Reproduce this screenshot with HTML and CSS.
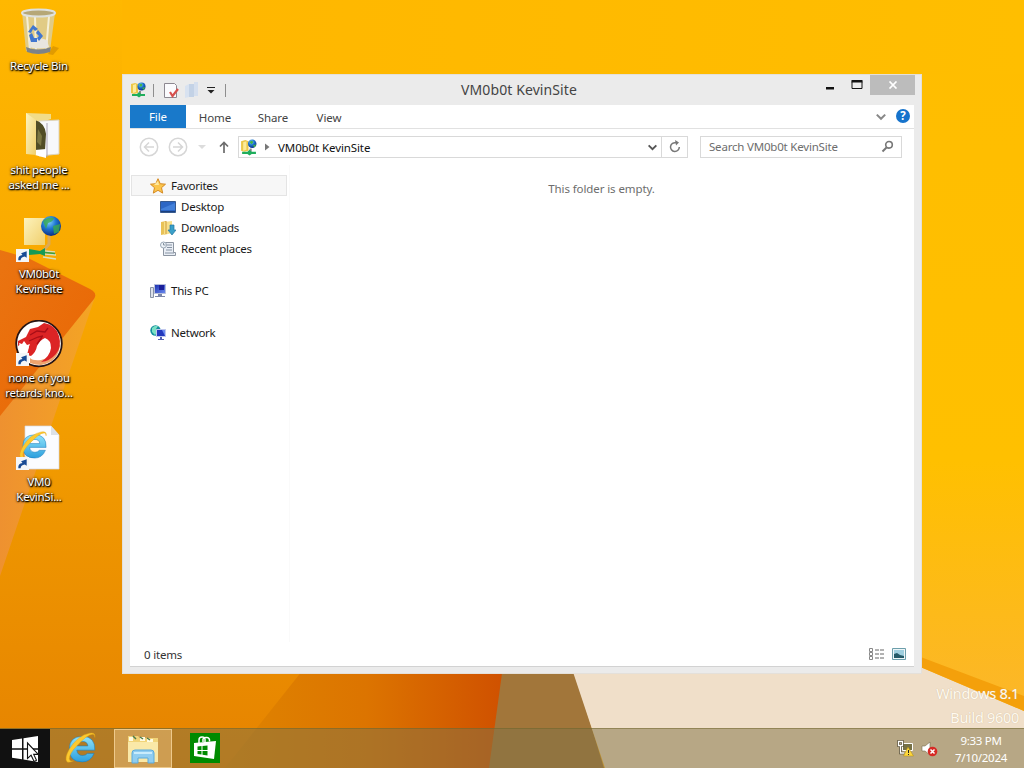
FILE: index.html
```
<!DOCTYPE html>
<html lang="en">
<head>
    <meta charset="UTF-8">
    <meta name="viewport" content="width=device-width, initial-scale=1.0">
    <title>VM0b0t KevinSite</title>
    <link rel="stylesheet" href="styles.css">
</head>
<body>
<!-- shared icons -->
<svg class="defs" width="0" height="0">
    <defs>
        <linearGradient id="ie-blue" x1="0" y1="0" x2="0" y2="1">
            <stop offset="0" stop-color="#8fe3fb"/><stop offset="1" stop-color="#2c9fdd"/>
        </linearGradient>
        <radialGradient id="globe" cx=".4" cy=".3" r=".7">
            <stop offset="0" stop-color="#7fd0ff"/><stop offset=".5" stop-color="#1c74cf"/><stop offset="1" stop-color="#0b2f86"/>
        </radialGradient>
        <linearGradient id="folder" x1="0" y1="0" x2="1" y2="1">
            <stop offset="0" stop-color="#fdf3bd"/><stop offset="1" stop-color="#f0cf6c"/>
        </linearGradient>
        <linearGradient id="screen" x1="0" y1="0" x2="1" y2="1">
            <stop offset="0" stop-color="#1b2fae"/><stop offset="1" stop-color="#6c8cf0"/>
        </linearGradient>
    </defs>
    <symbol id="site" viewBox="0 0 16 16">
        <path d="M1 2l4-1 3 1v9l-4 1-3-1z" fill="#ecc84a"/>
        <path d="M3 3l3-1v8l-3 1z" fill="#fbeb9b"/>
        <circle cx="11.500" cy="4.500" r="4" fill="url(#globe)"/>
        <path d="M9 3q2-2 3-1t-1 3zM12 6l3-1-1 3z" fill="#43b649"/>
        <path d="M9 9h2v3H9z" fill="#888"/>
        <path d="M2 12h5l2-2 2 2h4v2h-4l-2 1.500L7 14H2z" fill="#1fae5c"/>
    </symbol>
    <symbol id="ie" viewBox="0 0 32 32">
        <path d="M29 19H12q.8 5 5.500 5 3 0 4.500-2h6.300Q25 30 17.300 30 5 30 5 18T17.300 6Q29.500 6 29 19zM12 15h10.500q-.6-4.200-5-4.200T12 15z" fill="url(#ie-blue)" stroke="#1878b8" stroke-width=".5" fill-rule="evenodd"/>
        <path d="M29 7q1-5-5-4Q13 5 5 18 0 27 3 30q2 1 6-1-4 1-4-2 0-5 7-12Q22 4 27 4q2 0 2 3z" fill="#fcc92f" stroke="#e5a411" stroke-width=".4"/>
    </symbol>
    <symbol id="shortcut" viewBox="0 0 14 14">
        <path d="M0 0h14v14H0z" fill="#f4f6f8"/>
        <path d="M2.500 12Q2 7 7 6.500L5.500 4.500 11.500 2.500v7L9.500 8Q5 8.500 5 12z" fill="#174a94"/>
    </symbol>
    <symbol id="chevron" viewBox="0 0 10 10">
        <path d="M1.500 3L5 6.500 8.500 3" fill="none" stroke="currentColor" stroke-width="1.700"/>
    </symbol>
</svg>

<div class="desktop">
    <!-- wallpaper -->
    <svg class="wallpaper" viewBox="0 0 1024 768" preserveAspectRatio="none">
        <defs>
            <linearGradient id="bg" x1="0" y1="0" x2="0" y2="1">
                <stop offset="0" stop-color="#ffb800"/><stop offset=".35" stop-color="#f9a900"/>
                <stop offset=".65" stop-color="#ef9700"/><stop offset="1" stop-color="#e68300"/>
            </linearGradient>
            <linearGradient id="bg-right" x1="0" y1="0" x2="0" y2="1">
                <stop offset="0" stop-color="#ffbd00"/><stop offset=".6" stop-color="#ffc000"/><stop offset=".9" stop-color="#fcb727"/>
            </linearGradient>
            <linearGradient id="top" x1="0" y1="0" x2="1" y2="0">
                <stop offset="0" stop-color="#ffb600"/><stop offset="1" stop-color="#ffbe00"/>
            </linearGradient>
            <linearGradient id="fold" x1="0" y1="0" x2="1" y2="1">
                <stop offset="0" stop-color="#ea7411"/><stop offset="1" stop-color="#e96603"/>
            </linearGradient>
            <linearGradient id="ray" x1="0" y1="0" x2="1" y2="0">
                <stop offset="0" stop-color="#ee9130"/><stop offset="1" stop-color="#f4a524"/>
            </linearGradient>
            <linearGradient id="low" x1="0" y1="0" x2="1" y2="0">
                <stop offset="0" stop-color="#df8400"/><stop offset=".5" stop-color="#dc7400"/><stop offset="1" stop-color="#cf4f00"/>
            </linearGradient>
        </defs>
        <path d="M0 0h1024v768H0z" fill="url(#bg)"/>
        <path d="M400 0h624v768H400z" fill="url(#bg-right)"/>
        <path d="M122 0h902v74H122z" fill="url(#top)"/>
        <path d="M96 294L0 576V390z" fill="url(#ray)"/>
        <path d="M0 250l28 8 62 31q8 4 4 10L0 416z" fill="url(#fold)"/>
        <path d="M306 666L225 768h285V666z" fill="url(#low)"/>
        <path d="M503 666l-14 102h115l-31-102z" fill="#a2763a"/>
        <path d="M571 666h347l106 45v57H605z" fill="#f0dfc9"/>
        <path d="M918 656l106 40v15l-106-45z" fill="#f4a00b"/>
    </svg>

    <div class="icons">
        <div class="shortcut">
            <svg width="48" height="48" viewBox="0 0 48 48">
                <path d="M38 38l6 2-6 7-5-1z" fill="#a06000" opacity=".3"/>
                <path d="M7 4l4 39q12 5 24 0l5-38z" fill="#dccf9c" opacity=".85"/>
                <path d="M12 8l3 34M20 9l1 35M34 8l-3 35" stroke="#f5efd5" stroke-width="2"/>
                <path d="M11 39q12 5 25 0l-1 5q-12 4-23 0z" fill="#7d8387"/>
                <path d="M14 33l8-4 10 3 2 7q-10 3-20 0z" fill="#e8e6df"/>
                <ellipse cx="23.500" cy="5" rx="16.500" ry="3.500" fill="#b6a777" stroke="#dfe1de" stroke-width="2"/>
                <path d="M13 24l5-7 5 4-3 2-2-2-2 4zM23 22l5 6-4 5-2-3 2-2-3-3zM14 27l3-2 2 5h3v4h-6z" fill="#4177cf"/>
            </svg>
            <span>Recycle Bin</span>
        </div>
        <div class="shortcut">
            <svg width="48" height="48" viewBox="0 0 48 48">
                <path d="M11 1l25 1v5L21 12 11 6z" fill="#f1dc88"/>
                <path d="M24 9l20-1v34l-20 2z" fill="#f7f8fb" stroke="#dcd4bd"/>
                <path d="M20 8q10 3 11 14l-1 16-10 4z" fill="#514d26"/>
                <path d="M23 17l4 7-1 10-4-4z" fill="#7b7642"/>
                <path d="M32 11v34" stroke="#aaa3b4"/>
                <path d="M20 38l11-1v9l-11-3z" fill="#fff"/>
                <path d="M11 1l10 7v35l-10-1z" fill="url(#folder)"/>
            </svg>
            <span>shit people<br>asked me ...</span>
        </div>
        <div class="shortcut">
            <svg width="48" height="48" viewBox="0 0 48 48">
                <path d="M9 2h21v27H9z" fill="url(#folder)"/>
                <path d="M34 18v10l-5 6" stroke="#dcaa55" stroke-width="3" fill="none"/>
                <circle cx="36" cy="10" r="10" fill="url(#globe)"/>
                <path d="M28 5q5-5 11-3-1 4-6 5l-2 6zM38 10l7-2-1 8-5 2z" fill="#3bab4c" opacity=".8"/>
                <path d="M14 33l11 2 5-3v8l-5-2-11 1z" fill="#159a55"/>
                <path d="M30 35l10 1M30 38l11 1M28 41l13 2" stroke="#d9dfba" stroke-width="1.500"/>
                <path d="M30 36.500l10 1" stroke="#34a047" stroke-width="1.500"/>
                <use href="#shortcut" x="1" y="33" width="13" height="13"/>
            </svg>
            <span>VM0b0t<br>KevinSite</span>
        </div>
        <div class="shortcut">
            <svg width="48" height="48" viewBox="0 0 48 48">
                <circle cx="24" cy="23.500" r="22.800" fill="#fff" stroke="#271413" stroke-width="1.800"/>
                <path d="M26 45q18-3 19-21-5 13-19 16-8 1-11-2v5q5 2 11 2z" fill="#efa36c"/>
                <path d="M3 21l8-4 4-8 8-2 6-4q12 2 15 13 3 11-3 18-6 7-15 8 9-6 10-14 0-8-6-10-5 2-8 8-1 6-6 10l-4-1 2-8-5 1-3-4-3 2z" fill="#dc2425"/>
                <path d="M15 15l7-4 8 1 3-4M14 21l9-4 5-1M22 24l5-7" fill="none" stroke="#a80e17" stroke-width="1.300"/>
                <path d="M4 23l3 1 2-3 3 4 3-1-2 5-7 2z" fill="#fff"/>
                <use href="#shortcut" x="1" y="33" width="13" height="13"/>
            </svg>
            <span>none of you<br>retards kno...</span>
        </div>
        <div class="shortcut">
            <svg width="48" height="48" viewBox="0 0 48 48">
                <path d="M10 2h26l8 9v34H10z" fill="#fbfcff" stroke="#d7d9dd" stroke-width=".7"/>
                <path d="M36 2v9h8z" fill="#dce1e7"/>
                <use href="#ie" x="3" y="5" width="31" height="31"/>
                <use href="#shortcut" x="1" y="33" width="13" height="13"/>
            </svg>
            <span>VM0<br>KevinSi...</span>
        </div>
    </div>

    <div class="window">
        <div class="titlebar">
            <div class="quick">
                <svg width="16" height="16"><use href="#site"/></svg>
                <i class="sep"></i>
                <svg class="props" width="16" height="16" viewBox="0 0 16 16">
                    <path d="M1.500 1.500h10l2 2v12h-12z" fill="#fbfbfd" stroke="#8d8890"/>
                    <path d="M7 10l2.500 4L15 7" fill="none" stroke="#d6504d" stroke-width="2.200"/>
                </svg>
                <svg class="newfolder" width="14" height="16" viewBox="0 0 14 16">
                    <path d="M0 4l4-2v13l-4 1z" fill="#d8e2f0"/><path d="M4 2h5v13H4z" fill="#c3d2e6"/><path d="M9 0h4v14H9z" fill="#d5dfee"/>
                </svg>
                <svg class="menu" width="8" height="8" viewBox="0 0 8 8"><path d="M0 1.500h8" stroke="#222"/><path d="M.5 4h7L4 7.500z" fill="#222"/></svg>
                <i class="sep"></i>
            </div>
            <div class="title">VM0b0t KevinSite</div>
            <div class="controls">
                <svg width="10" height="12" viewBox="0 0 10 12"><path d="M1 9h8v2.500H1z" fill="#111"/></svg>
                <svg class="max" width="12" height="10" viewBox="0 0 12 10"><path d="M1 1.500h10v7H1z" fill="none" stroke="#111"/><path d="M.5 0h11v2.500H.5z" fill="#111"/></svg>
                <div class="close"><svg width="10" height="8" viewBox="0 0 10 8"><path d="M1.500 .5l7 7M8.500 .5l-7 7" stroke="#fff" stroke-width="1.700"/></svg></div>
            </div>
        </div>

        <div class="client">
            <div class="tabs">
                <div class="tab file">File</div>
                <div class="tab">Home</div>
                <div class="tab">Share</div>
                <div class="tab view">View</div>
                <svg class="expand" width="12" height="12"><use href="#chevron"/></svg>
                <div class="help">?</div>
            </div>

            <div class="navbar">
                <svg width="20" height="20" viewBox="0 0 20 20" class="nav"><circle cx="10" cy="10" r="8.700"/><path d="M15 10H6M10 5.500L5.500 10l4.500 4.500"/></svg>
                <svg width="20" height="20" viewBox="0 0 20 20" class="nav"><circle cx="10" cy="10" r="8.700"/><path d="M5 10h9M10 5.500l4.500 4.500-4.500 4.500"/></svg>
                <svg class="recent" width="8" height="4" viewBox="0 0 8 4"><path d="M0 0h8L4 4z" fill="#dcdcdc"/></svg>
                <svg class="up" width="12" height="14" viewBox="0 0 12 14"><path d="M6 13V2.500M2 6.500l4-4 4 4" fill="none" stroke="#6c6c6c" stroke-width="1.700"/></svg>
                <div class="address">
                    <svg width="17" height="17"><use href="#site"/></svg>
                    <svg class="arrow" width="5" height="8" viewBox="0 0 5 8"><path d="M0 .5L4.500 4 0 7.500z" fill="#777"/></svg>
                    <span>VM0b0t KevinSite</span>
                    <svg class="drop" width="11" height="11"><use href="#chevron"/></svg>
                    <div class="refresh">
                        <svg width="14" height="14" viewBox="0 0 14 14"><path d="M8 2.800A4.400 4.400 0 1 0 11.300 7" fill="none" stroke="#777" stroke-width="1.500"/><path d="M7 0l4 2.500L8 5.500z" fill="#777"/></svg>
                    </div>
                </div>
                <div class="search">
                    <span>Search VM0b0t KevinSite</span>
                    <svg width="13" height="13" viewBox="0 0 13 13"><circle cx="8" cy="4.800" r="3.300" fill="none" stroke="#777" stroke-width="1.600"/><path d="M5.500 7.500L1.500 11.500" stroke="#777" stroke-width="2"/></svg>
                </div>
            </div>

            <div class="content">
                <div class="sidebar">
                    <div class="row selected">
                        <svg width="16" height="16" viewBox="0 0 16 16"><path d="M8 .7l2.200 5 5.300.5-4 3.500 1.200 5.400L8 12.300l-4.700 2.800 1.200-5.400-4-3.500 5.300-.5z" fill="#fbc54c" stroke="#d58a22"/><path d="M8 3l1 4-5 0z" fill="#ffe9a0"/></svg>
                        Favorites
                    </div>
                    <div class="row sub">
                        <svg width="16" height="16" viewBox="0 0 16 16"><path d="M.5 2.500h15v11H.500z" fill="#2c66c5" stroke="#36598f"/><path d="M1 10l14-6v7H1z" fill="#4380da"/><path d="M1 12h14v1H1z" fill="#1b3f7d"/></svg>
                        Desktop
                    </div>
                    <div class="row sub">
                        <svg width="16" height="16" viewBox="0 0 16 16"><path d="M1 2l5-1v13l-5 1z" fill="#e9c257"/><path d="M4 2l8-1v12l-8 2z" fill="#f7df8a"/><path d="M6 1v13" stroke="#cf9c3c"/><path d="M10 5h4v5h2l-4 5-4-5h2z" fill="#3aa0c9" stroke="#2277a1" stroke-width=".7"/></svg>
                        Downloads
                    </div>
                    <div class="row sub">
                        <svg width="16" height="16" viewBox="0 0 16 16"><path d="M3.500 1.500h10v10h2v3h-12z" fill="#e9eef5" stroke="#8c95a1"/><path d="M7 4h5M7 6.500h5M6 9h6M5 12h9" stroke="#8894a4"/><circle cx="3.500" cy="4" r="3" fill="#eef3f8" stroke="#9ba8b6"/><path d="M3.500 2v2h2" stroke="#607080" fill="none" stroke-width=".7"/></svg>
                        Recent places
                    </div>
                    <div class="row gap">
                        <svg width="16" height="16" viewBox="0 0 16 16"><path d="M.5 4.500h3v10h-3z" fill="#dce1ea" stroke="#8993a5"/><path d="M4.500 1.500h11v9h-11z" fill="url(#screen)" stroke="#b7bfdb"/><path d="M9 2h5v5H9z" fill="#1a1f9a"/><path d="M8 11h4v2h3v1H5v-1h3z" fill="#7b86a8"/></svg>
                        This PC
                    </div>
                    <div class="row gap">
                        <svg width="16" height="16" viewBox="0 0 16 16"><circle cx="5.500" cy="5.500" r="5.200" fill="#128f9d"/><path d="M2 3q3-3 6-2L6 4l3 2-4 4-3-3z" fill="#7be0c4"/><path d="M6.500 4.500h9v7h-9z" fill="#2238bd" stroke="#c0c8ee"/><path d="M12 5h3v6z" fill="#6c8cf0"/><path d="M10 12h2v2h2v1H8v-1h2z" fill="#5361b4"/></svg>
                        Network
                    </div>
                </div>
                <div class="files">This folder is empty.</div>
            </div>

            <div class="status">
                <span>0 items</span>
                <svg class="details" width="15" height="12" viewBox="0 0 15 12"><path d="M.5 .5h3v3h-3zM.5 4.500h3v3h-3zM.5 8.500h3v3h-3z" fill="#fff" stroke="#888"/><path d="M6 2h9M6 6h9M6 10h9" stroke="#666" stroke-dasharray="4 1"/></svg>
                <svg width="14" height="12" viewBox="0 0 14 12"><path d="M.5 .5h13v11H.5z" fill="#eef6f8" stroke="#6c9eab"/><path d="M2 2h10v8H2z" fill="#9fcfdf"/><path d="M2 10V6l3-1 3 2 4 1v2z" fill="#245a68"/></svg>
            </div>
        </div>
    </div>

    <div class="watermark">Windows 8.1<br>Build 9600</div>

    <div class="taskbar">
        <div class="start">
            <svg width="30" height="28" viewBox="0 0 30 28">
                <path d="M2 5l10-1.500v9.700H2zM13.500 3.300L28 1v12.200H13.500zM2 14.700h10v9.500L2 22.700zM13.500 14.700H28V27l-14.500-2.500z" fill="#fff"/>
                <path d="M17.500 8v15.500l3.600-3.300 3 6.300 2.400-1.200-2.800-5.900h4.600z" fill="#fff" stroke="#111" stroke-width="1.100"/>
            </svg>
        </div>
        <div class="app"><svg width="34" height="34"><use href="#ie"/></svg></div>
        <div class="app active">
            <svg width="32" height="30" viewBox="0 0 32 30">
                <path d="M1 2h10l2 2h18v24H1z" fill="#f1d479"/>
                <path d="M2 3h4v4H2zM13 3h5v4h-5zM20 5h6v3h-6z" fill="#fffbe0"/>
                <path d="M6 2l3 3M13 3l3 2M20 4l3 2" stroke="#4e7c4c" stroke-width="1.500"/>
                <path d="M1 8h30v20H1z" fill="#fae9a8"/>
                <path d="M5 29V19q0-3 3-3h16q3 0 3 3v10h-6v-5H11v5z" fill="#90cdf0" stroke="#5baadb"/>
                <path d="M7 19h18" stroke="#c9ecfc" stroke-width="2"/>
            </svg>
        </div>
        <div class="app store">
            <svg width="30" height="30" viewBox="0 0 30 30">
                <path d="M0 0h30v30H0z" fill="#008a00"/>
                <path d="M4 10l22-2-2 18-20-3z" fill="#fff"/>
                <path d="M9 11V7q0-3 3-3t3 2v4M13 9V6q1-2 4-1.500t2.500 4" fill="none" stroke="#fff" stroke-width="1.500"/>
                <path d="M7.500 13.500l4-.5v4h-4zM12.500 12.900l5-.5V17h-5zM7.500 18h4v3.500l-4-.5zM12.500 18h5v4.500l-5-.8z" fill="#008a00"/>
            </svg>
        </div>
        <div class="tray">
            <svg width="17" height="17" viewBox="0 0 17 17">
                <path d="M5.500 3.500h10v7h-10z" fill="#777146" stroke="#fff"/>
                <path d="M1.500 1.500h4v4h-4zM3.500 6v7h4" fill="none" stroke="#443d24" stroke-width="2.500"/>
                <path d="M1.500 1.500h4v4h-4zM3.500 6v7h4" fill="none" stroke="#fff" stroke-width="1.300"/>
                <path d="M11 7l5.500 9h-10z" fill="#ffd83c" stroke="#ae8a10" stroke-width=".5"/><path d="M11.500 10v3M11.500 14v1" stroke="#222"/>
            </svg>
            <svg width="17" height="17" viewBox="0 0 17 17">
                <path d="M1 6h3l5-4v13l-5-4H1z" fill="#fff" stroke="#776c4e" stroke-width=".6"/>
                <circle cx="11.500" cy="11.500" r="4.800" fill="#d62a25"/><path d="M9.500 9.500l4 4M13.500 9.500l-4 4" stroke="#fff" stroke-width="1.500"/>
            </svg>
            <div class="clock">9:33 PM<br>7/10/2024</div>
        </div>
    </div>
</div>
</body>
</html>
```
FILE: styles.css
```
*{
    box-sizing: border-box;
}

body{
    margin:0;
    font-family: "Noto Sans", "Open Sans", sans-serif;
    font-size: 11.5px;
    letter-spacing:-0.1px;
    color:#1a1a1a;
    overflow:hidden;
}

svg{
    display:block;
    flex:none;
}

.defs{
    position:absolute;
}

.desktop{
    position:relative;
    width:1024px;
    height:768px;
    display:flex;
    flex-direction: column;
    justify-content: space-between;
}

.wallpaper{
    position:absolute;
    inset:0;
    width:100%;
    height:100%;
}

/* desktop icons */
.icons{
    position:relative;
    width:78px;
    padding-top:8px;
}

.shortcut{
    height:104px;
    display:flex;
    flex-direction: column;
    align-items:center;
    text-align:center;
    line-height:15px;
    color:#fff;
    white-space:nowrap;
    text-shadow:1px 1px 1px #000, 0 1px 2px #000, 0 0 3px rgba(0, 0, 0, 0.7);
}

.shortcut span{
    margin-top:2px;
    letter-spacing:-0.25px;
}

/* explorer window */
.window{
    position:absolute;
    left:122px;
    top:74px;
    width:800px;
    height:600px;
    padding:0 7px 6px;
    background-color:#ebebeb;
    border:1px solid #e4e0da;
    display:flex;
    flex-direction: column;
}

.titlebar{
    height:30px;
    flex:none;
    display:grid;
    grid-template-columns: 1fr auto 1fr;
}

.quick{
    display:flex;
    align-items:center;
}

.quick .sep{
    width:1px;
    height:13px;
    background-color:#8e8e8e;
    margin:0 9px 0 7px;
}

.newfolder{
    margin:0 8px 0 6px;
}

.quick .menu + .sep{
    margin-left:10px;
}

.title{
    font-size:14px;
    line-height:29px;
    letter-spacing:0.1px;
    color:#444;
    padding-right:6px;
}

.controls{
    display:flex;
    justify-content: flex-end;
    align-items:flex-start;
    margin-right:-1px;
}

.controls > svg{
    margin-top:3px;
}

.controls .max{
    margin:5px 7px 0 16px;
}

.close{
    width:45px;
    height:20px;
    background-color:#bcbcbc;
    display:flex;
    align-items:center;
    justify-content: center;
}

.client{
    flex:1;
    background-color:#fff;
    border-bottom:1px solid #d2d2d2;
    display:flex;
    flex-direction: column;
}

.tabs{
    height:24px;
    flex:none;
    display:flex;
    align-items:center;
    border-bottom:1px solid #e1e1e1;
}

.tab{
    width:58px;
    text-align:center;
    line-height:23px;
    padding-top:2px;
    color:#444;
}

.tab.file{
    width:56px;
    height:23px;
    padding-top:0;
    background-color:#1979ca;
    color:#fff;
}

.tab.view{
    width:54px;
}

.expand{
    margin-left:auto;
    color:#888;
}

.help{
    width:14px;
    height:14px;
    margin:0 4px 1px 9px;
    border-radius:50%;
    background-color:#1673cc;
    color:#fff;
    font-weight:bold;
    line-height:14px;
    text-align:center;
}

.navbar{
    height:36px;
    flex:none;
    display:flex;
    align-items:center;
    padding:0 12px 0 9px;
}

.nav{
    fill:none;
    stroke:#d6d6d6;
    stroke-width:1.5;
    margin-right:9px;
}

.recent{
    margin-left:1px;
}

.up{
    margin:0 8px 0 12px;
}

.address{
    width:450px;
    height:22px;
    border:1px solid #d9d9d9;
    display:flex;
    align-items:center;
    padding-left:1px;
}

.arrow{
    margin:0 8px 0 8px;
}

.address span{
    color:#111;
}

.drop{
    margin-left:auto;
    margin-right:3px;
    color:#555;
}

.refresh{
    width:26px;
    height:20px;
    border-left:1px solid #d9d9d9;
    display:flex;
    align-items:center;
    justify-content: center;
}

.search{
    width:202px;
    height:22px;
    margin-left:auto;
    border:1px solid #d9d9d9;
    display:flex;
    align-items:center;
    justify-content: space-between;
    padding:0 7px 1px 8px;
    color:#6d6d6d;
    letter-spacing:-0.2px;
}

.content{
    flex:1;
    display:flex;
}

.sidebar{
    width:160px;
    padding:10px 2px 0 1px;
    border-right:1px solid #fafafa;
}

.row{
    width:156px;
    height:21px;
    display:flex;
    align-items:center;
    gap:5px;
    padding-left:18px;
    border:1px solid transparent;
    letter-spacing:-0.25px;
}

.row.sub{
    padding-left:28px;
}

.row.gap{
    margin-top:21px;
}

.selected{
    background-color:#f7f7f7;
    border-color:#e4e4e4;
}

.files{
    flex:1;
    text-align:center;
    padding:16px 1px 0 0;
    color:#6d6d6d;
}

.status{
    height:24px;
    flex:none;
    display:flex;
    align-items:center;
    padding:0 8px 0 14px;
    color:#333;
    letter-spacing:-0.2px;
}

.details{
    margin-left:auto;
    margin-right:8px;
}

.watermark{
    position:absolute;
    right:5px;
    top:681px;
    font-size:14.5px;
    line-height:24px;
    letter-spacing:-0.3px;
    text-align:right;
    color:#fffaf0;
    text-shadow:0 0 1px #c8b090;
}

/* taskbar */
.taskbar{
    position:relative;
    height:40px;
    display:flex;
    background-color:rgba(130, 115, 70, 0.52);
    border-top:1px solid rgba(110, 100, 40, 0.5);
}

.start{
    width:50px;
    background-color:#111;
    display:flex;
    align-items:center;
    justify-content: center;
}

.app{
    width:58px;
    margin-right:4px;
    display:flex;
    align-items:center;
    justify-content: center;
}

.app:nth-child(2){
    width:60px;
    padding-left:2px;
    padding-bottom:4px;
}

.app.active{
    background-color:rgba(255, 220, 160, 0.36);
    border:1px solid rgba(255, 225, 170, 0.65);
}

.store{
    padding-bottom:2px;
}

.tray{
    margin-left:auto;
    display:flex;
    align-items:center;
    gap:7px;
    padding-right:14px;
    color:#fff;
}

.clock{
    width:58px;
    margin-left:7px;
    line-height:17px;
    text-align:center;
    letter-spacing:-0.3px;
    white-space:nowrap;
}
```
